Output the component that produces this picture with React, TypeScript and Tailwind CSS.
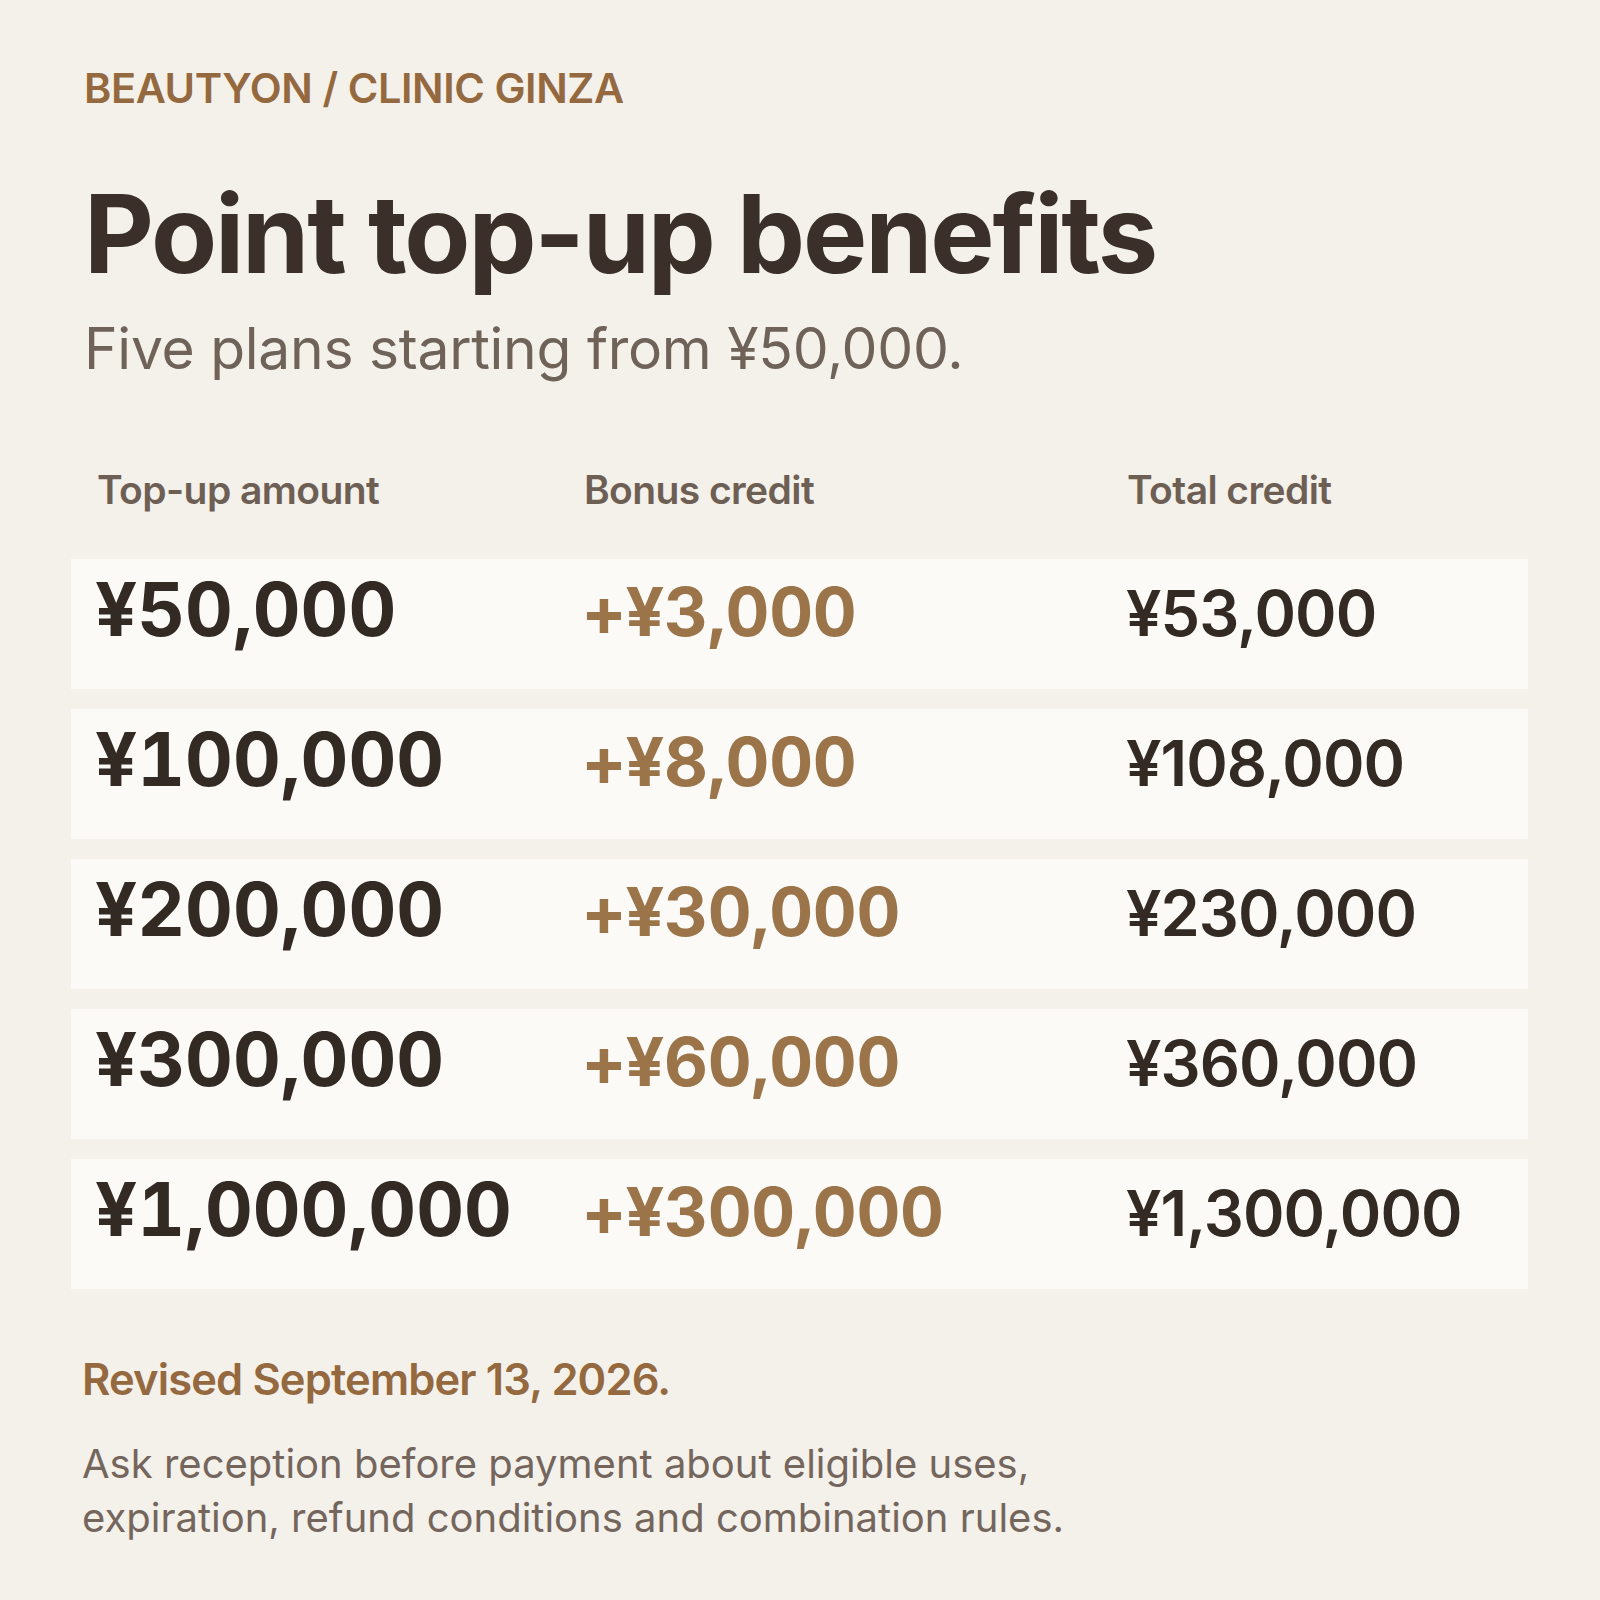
import React from "react";

const rows = [
  ["¥50,000", "+¥3,000", "¥53,000"],
  ["¥100,000", "+¥8,000", "¥108,000"],
  ["¥200,000", "+¥30,000", "¥230,000"],
  ["¥300,000", "+¥60,000", "¥360,000"],
  ["¥1,000,000", "+¥300,000", "¥1,300,000"],
];

export default function App() {
  return (
    <div className="w-[1600px] h-[1600px] bg-[#f4f1eb] font-['Inter',sans-serif] pt-[68px] overflow-hidden">
      <div className="pl-[84px]">
        <div className="text-[41.5px] leading-none font-semibold text-[#95693f] tracking-[-0.01em]">
          BEAUTYON / CLINIC GINZA
        </div>
        <h1 className="mt-[70px] text-[108px] leading-none font-bold text-[#3a2f29] tracking-[-0.02em]">
          Point top-up benefits
        </h1>
        <p className="mt-[32px] text-[57px] leading-none text-[#6f6359] tracking-[-0.005em]">
          Five plans starting from ¥50,000.
        </p>
      </div>
      <div className="ml-[71px] w-[1457px]">
        <div className="mt-[93px] grid grid-cols-[487px_543px_1fr] pl-[26px] text-[39px] leading-none font-semibold text-[#6e5f55] tracking-[-0.015em]">
          <div>Top-up amount</div>
          <div>Bonus credit</div>
          <div>Total credit</div>
        </div>
        <div className="mt-[50px] flex flex-col gap-[20px]">
          {rows.map((r) => (
            <div
              key={r[0]}
              className="h-[130px] bg-[#fbfaf7] grid grid-cols-[487px_544px_1fr] items-baseline pl-[24px] pt-[13px]"
            >
              <div className="text-[74px] leading-none font-bold text-[#342a24] tabular-nums">{r[0]}</div>
              <div className="text-[68px] leading-none font-bold text-[#9b7549] tabular-nums tracking-[-0.005em]">{r[1]}</div>
              <div className="text-[63px] leading-none font-semibold text-[#342a24] tracking-[-0.015em]">{r[2]}</div>
            </div>
          ))}
        </div>
      </div>
      <div className="pl-[82px]">
        <div className="mt-[69px] text-[43.5px] leading-none font-semibold text-[#94693f] tracking-[-0.02em]">
          Revised September 13, 2026.
        </div>
        <p className="mt-[36px] text-[40px] leading-[54px] text-[#74665c]">
          Ask reception before payment about eligible uses,
          <br />
          expiration, refund conditions and combination rules.
        </p>
      </div>
    </div>
  );
}
